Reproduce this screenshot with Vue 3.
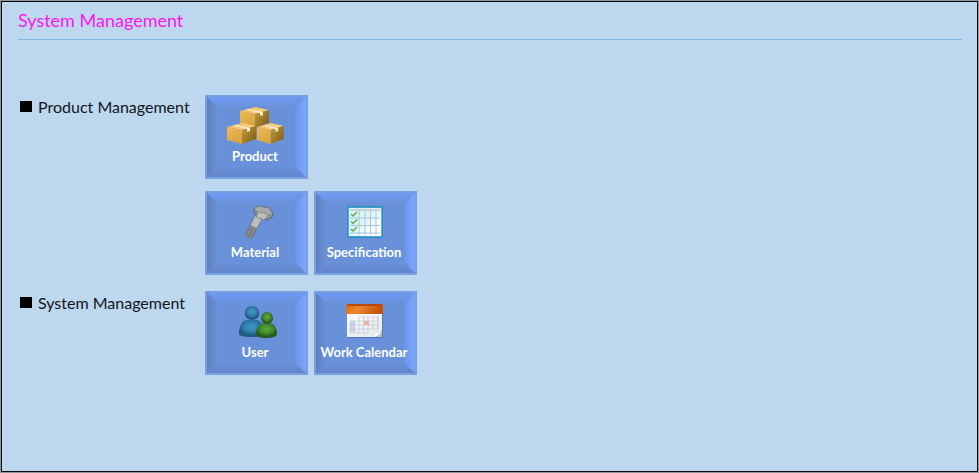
<script setup>
const groups = [
  { name: 'Product Management', rows: [['Product'], ['Material', 'Specification']] },
  { name: 'System Management', rows: [['User', 'Work Calendar']] }
]
</script>

<template>
  <main class="page">
    <header class="page-header">
      <h1>System Management</h1>
    </header>

    <svg class="defs" aria-hidden="true">
      <defs>
        <linearGradient id="edge-left"><stop offset="0" stop-color="#6080bb" /><stop offset="1" stop-color="#6991da" /></linearGradient>
        <linearGradient id="edge-right"><stop offset="0" stop-color="#6c96e3" /><stop offset=".6" stop-color="#75a0f6" /><stop offset="1" stop-color="#79a6ff" /></linearGradient>
        <linearGradient id="edge-top" x2="0" y2="1"><stop offset="0" stop-color="#6e9af4" /><stop offset="1" stop-color="#6991da" /></linearGradient>
        <linearGradient id="edge-bottom" x2="0" y2="1"><stop offset="0" stop-color="#6991da" /><stop offset="1" stop-color="#6385cb" /></linearGradient>
        <linearGradient id="box-top" x2="1" y2=".4"><stop offset="0" stop-color="#eeb961" /><stop offset="1" stop-color="#fbd28a" /></linearGradient>
        <linearGradient id="box-left" x2=".4" y2="1"><stop offset="0" stop-color="#eeb94f" /><stop offset="1" stop-color="#d9a544" /></linearGradient>
        <linearGradient id="box-right" x2="1" y2=".8"><stop offset="0" stop-color="#c59b3e" /><stop offset="1" stop-color="#806019" /></linearGradient>
        <linearGradient id="sheet" x2="1" y2="1"><stop offset="0" stop-color="#d4f4fb" /><stop offset=".45" stop-color="#d9f3f8" /><stop offset=".75" stop-color="#fff" /></linearGradient>
        <radialGradient id="blue" cx=".5" cy=".4"><stop offset="0" stop-color="#4498c5" /><stop offset=".6" stop-color="#317fae" /><stop offset="1" stop-color="#20597f" /></radialGradient>
        <radialGradient id="green" cx=".5" cy=".4"><stop offset="0" stop-color="#5eac40" /><stop offset=".6" stop-color="#438b2b" /><stop offset="1" stop-color="#285b1b" /></radialGradient>
        <linearGradient id="orange" x2="1" y2=".2"><stop offset="0" stop-color="#d96713" /><stop offset=".4" stop-color="#ee882c" /><stop offset="1" stop-color="#c25209" /></linearGradient>
        <linearGradient id="paper" x2="1" y2="1"><stop offset="0" stop-color="#fff" /><stop offset="1" stop-color="#e5e6e9" /></linearGradient>
        <g id="box">
          <path d="M0 4 15 0 29 3 15 7Z" fill="url(#box-top)" />
          <path d="M0 4 15 7V21L0 17Z" fill="url(#box-left)" />
          <path d="M15 7 29 3V16L15 21Z" fill="url(#box-right)" />
          <path d="M6 2.500 8 2 23 5V9L22 8 20 9V6Z" fill="#ffedd0" />
        </g>
      </defs>
    </svg>

    <section v-for="group in groups" :key="group.name" class="group">
      <h2><span class="marker"></span>{{ group.name }}</h2>
      <div class="rows">
        <div v-for="(row, index) in group.rows" :key="index" class="row">
          <button v-for="item in row" :key="item" type="button" class="tile">
            <svg class="bevel" viewBox="0 0 100 82" preserveAspectRatio="none" aria-hidden="true">
              <path d="M0 0H100L89 11H11Z" fill="url(#edge-top)" />
              <path d="M0 82H100L89 71H11Z" fill="url(#edge-bottom)" />
              <path d="M0 0 11 11V71L0 82Z" fill="url(#edge-left)" />
              <path d="M100 0 89 11V71L100 82Z" fill="url(#edge-right)" />
            </svg>

            <svg v-if="item === 'Product'" class="icon" viewBox="0 0 58 40" aria-hidden="true">
              <use href="#box" x="14" y="1" />
              <use href="#box" x="1" y="17" />
              <use href="#box" transform="translate(31 17) scale(.92 1)" />
            </svg>

            <svg v-else-if="item === 'Material'" class="icon" viewBox="0 0 58 40" aria-hidden="true">
              <path d="M29 13 36 17 26 36 19 34Z" fill="#bcbebe" stroke="#646668" stroke-width=".7" />
              <path d="M24 23 31 26 26 36 19 34Z" fill="#77797b" />
              <path d="M26 24 21 34M29 25 24 35" stroke="#a7a8a8" stroke-width=".7" />
              <path d="M28 7 32 4 43 6 47 12 46 15 41 18 32 15 28 10Z" fill="#929596" stroke="#505356" stroke-width=".8" />
              <path d="M28 7 32 4 43 6 47 12 41 14 33 11Z" fill="#a7aaaa" stroke="#696c6d" stroke-width=".5" />
              <path d="M32 10 39 11 42 14 38 18 30 15Z" fill="#bbbdbd" stroke="#6e7173" stroke-width=".6" />
            </svg>

            <svg v-else-if="item === 'Specification'" class="icon" viewBox="0 0 58 40" aria-hidden="true">
              <rect x="13" y="5" width="34" height="30" rx="1" fill="url(#sheet)" stroke="#168abd" stroke-width="1.3" />
              <path d="M15 7H45V9H15Z" fill="#d2cfce" />
              <path d="M15 16H45M15 23.500H45M15 31H45M24 8V33M30 8V33M35.500 8V33M41 8V33" stroke="#a9c6df" stroke-width="1" />
              <path d="M16 12 18 14 22 10M16 19.500 18 21.500 22 17.500M16 27 18 29 22 25" fill="none" stroke="#69a943" stroke-width="1.500" />
            </svg>

            <svg v-else-if="item === 'User'" class="icon" viewBox="0 0 58 40" aria-hidden="true">
              <path d="M13 32C13 24 16 18 22 18H30C35 18 38 24 38 32Q38 35 26 35 13 35 13 32Z" fill="url(#blue)" />
              <ellipse cx="26" cy="11" rx="7.300" ry="7" fill="url(#blue)" />
              <path d="M30 32C30 26 34 21 39 21H43C48 21 51 26 51 32Q51 36 40 36 30 36 30 32Z" fill="url(#green)" />
              <circle cx="41" cy="16" r="6" fill="url(#green)" />
            </svg>

            <svg v-else class="icon" viewBox="0 0 58 40" aria-hidden="true">
              <rect x="12" y="3" width="36" height="33" rx="1" fill="#385d9b" opacity=".5" />
              <path d="M12 10H47V34L46 35H12Z" fill="url(#paper)" />
              <path d="M11 12V3Q11 2 13 2H46Q48 2 48 4V12Z" fill="url(#orange)" />
              <path d="M12 2H47V4H12Z" fill="#b94a0d" />
              <path d="M12 12.500H47" stroke="#fff" />
              <path d="M15 19H20V30H15Z" fill="#c6d7f4" />
              <path d="M29 19H34V23H29Z" fill="#f7b08f" />
              <path d="M24 15H43V27M15 19H43M15 23H43M15 27H43M15 31H33V15M15 19V31M19.500 19V31M24 15V31M28.500 15V31M38 15V27M43 15V27" fill="none" stroke="#b9bfd1" stroke-width=".6" />
              <path d="M38 35Q45 34 47 27V34L46 35Z" fill="#bfc1c4" />
              <path d="M37 35Q41 33 42 31 44 33 47 28 45 34 37 35Z" fill="#fff" />
            </svg>
            <span class="caption">{{ item }}</span>
          </button>
        </div>
      </div>
    </section>
  </main>
</template>

<style>
body {
  margin: 0;
}
</style>

<style scoped>
.page {
  box-sizing: border-box;
  min-height: 100vh;
  padding: 8px 16px 8px 17px;
  border: 1px solid #92979b;
  background: #bdd7ee;
  box-shadow: inset 0 0 0 1px #080b10;
  font-family: Lato, "Open Sans", sans-serif;
}

.page-header {
  margin-bottom: 55px;
  padding-bottom: 8px;
  border-bottom: 1px solid #82b3df;
}

h1 {
  margin: 0;
  color: #fa16f0;
  font-size: 18px;
  font-weight: 400;
  line-height: 22px;
}

.defs {
  position: absolute;
  width: 0;
  height: 0;
}

.group {
  display: grid;
  grid-template-columns: 187px 1fr;
  margin-bottom: 16px;
}

h2 {
  display: flex;
  align-items: center;
  gap: 6px;
  height: 22px;
  margin: 0;
  padding-left: 2px;
  color: #10161c;
  font-size: 16px;
  font-weight: 400;
  white-space: nowrap;
}

.marker {
  width: 12px;
  height: 11px;
  background: #000;
}

.rows {
  display: grid;
  gap: 12px;
}

.row {
  display: flex;
  gap: 6px;
}

.tile {
  position: relative;
  display: flex;
  flex-direction: column;
  align-items: center;
  width: 103px;
  height: 84px;
  padding: 9px 3px 0 0;
  border: 2px solid #789fdf;
  background: #6991da;
  color: #fff;
  font-family: inherit;
  font-size: 13px;
  font-weight: 700;
  line-height: 20px;
  white-space: nowrap;
  cursor: pointer;
}

.bevel {
  position: absolute;
  inset: 0;
  width: 100%;
  height: 100%;
}

.icon {
  position: relative;
  width: 58px;
  height: 40px;
}

.caption {
  position: relative;
}
</style>
